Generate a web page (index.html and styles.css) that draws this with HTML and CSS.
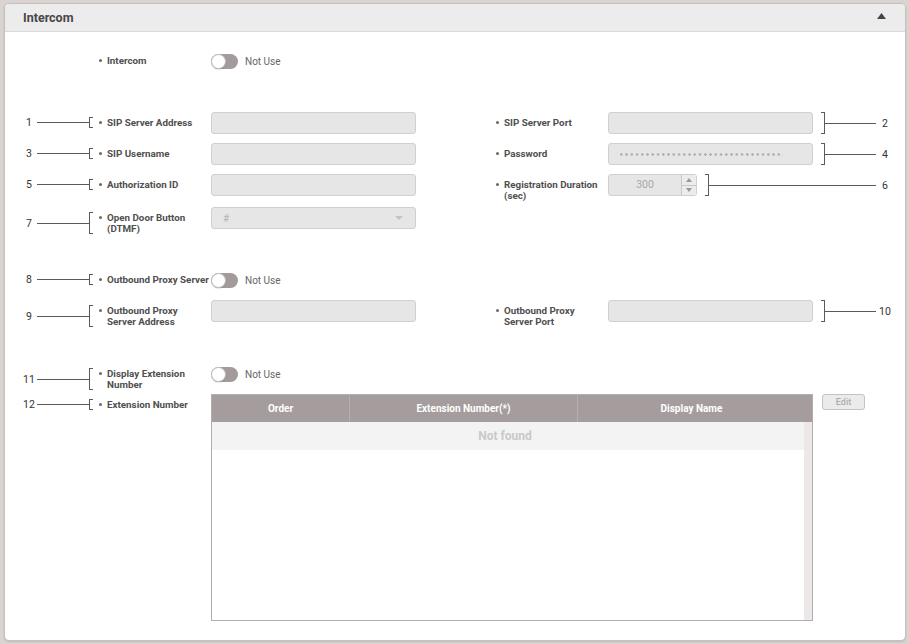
FILE: index.html
```html
<!DOCTYPE html>
<html>
<head>
<meta charset="utf-8">
<link rel="stylesheet" href="styles.css">
</head>
<body>
<div class="panel">
  <div class="phead">
    <span class="ptitle">Intercom</span>
    <svg class="caret" width="9" height="6" viewBox="0 0 9 6"><path d="M4.5 0L9 6H0z" fill="#454545"/></svg>
  </div>
  <div class="pbody">
    <div class="row h62">
      <div class="lcell"><span class="co-l hide"><span class="num">0</span><span class="ln"></span><span class="br"></span></span><span class="dot"></span><span class="lab">Intercom</span></div>
      <div class="fcell tg"><span class="tog"></span><span class="tog-t">Not Use</span></div>
    </div>

    <div class="row h31">
      <div class="lcell"><span class="co-l"><span class="num">1</span><span class="ln"></span><span class="br"></span></span><span class="dot"></span><span class="lab">SIP Server Address</span></div>
      <div class="fcell"><div class="inp"></div></div>
      <div class="gap"></div>
      <div class="rcell"><span class="dot"></span><span class="lab">SIP Server Port</span></div>
      <div class="rfield"><div class="inp"></div><span class="co-r"><span class="br"></span><span class="ln"></span><span class="num">2</span></span></div>
    </div>

    <div class="row h31">
      <div class="lcell"><span class="co-l"><span class="num">3</span><span class="ln"></span><span class="br"></span></span><span class="dot"></span><span class="lab">SIP Username</span></div>
      <div class="fcell"><div class="inp"></div></div>
      <div class="gap"></div>
      <div class="rcell"><span class="dot"></span><span class="lab">Password</span></div>
      <div class="rfield"><div class="inp pw"><span class="pwdots"></span></div><span class="co-r"><span class="br"></span><span class="ln"></span><span class="num">4</span></span></div>
    </div>

    <div class="row h33">
      <div class="lcell"><span class="co-l"><span class="num">5</span><span class="ln"></span><span class="br"></span></span><span class="dot"></span><span class="lab">Authorization ID</span></div>
      <div class="fcell"><div class="inp"></div></div>
      <div class="gap"></div>
      <div class="rcell"><span class="dot"></span><span class="lab">Registration Duration<br>(sec)</span></div>
      <div class="rfield">
        <div class="inp spin"><span class="spin-v">300</span><span class="spin-b"><span class="sb up"></span><span class="sb dn"></span></span></div>
        <span class="co-r"><span class="br"></span><span class="ln"></span><span class="num">6</span></span>
      </div>
    </div>

    <div class="row h62">
      <div class="lcell"><span class="co-l"><span class="num">7</span><span class="ln"></span><span class="br"></span></span><span class="dot"></span><span class="lab">Open Door Button<br>(DTMF)</span></div>
      <div class="fcell"><div class="inp sel"><span class="sel-v">#</span><span class="sel-a"></span></div></div>
    </div>

    <div class="row h31">
      <div class="lcell"><span class="co-l"><span class="num">8</span><span class="ln"></span><span class="br"></span></span><span class="dot"></span><span class="lab">Outbound Proxy Server</span></div>
      <div class="fcell tg"><span class="tog"></span><span class="tog-t">Not Use</span></div>
    </div>

    <div class="row h63">
      <div class="lcell"><span class="co-l"><span class="num">9</span><span class="ln"></span><span class="br"></span></span><span class="dot"></span><span class="lab">Outbound Proxy<br>Server Address</span></div>
      <div class="fcell"><div class="inp"></div></div>
      <div class="gap"></div>
      <div class="rcell"><span class="dot"></span><span class="lab">Outbound Proxy<br>Server Port</span></div>
      <div class="rfield"><div class="inp"></div><span class="co-r"><span class="br"></span><span class="ln"></span><span class="num">10</span></span></div>
    </div>

    <div class="row h31">
      <div class="lcell"><span class="co-l"><span class="num">11</span><span class="ln"></span><span class="br"></span></span><span class="dot"></span><span class="lab">Display Extension<br>Number</span></div>
      <div class="fcell tg"><span class="tog"></span><span class="tog-t">Not Use</span></div>
    </div>

    <div class="row">
      <div class="lcell"><span class="co-l"><span class="num">12</span><span class="ln"></span><span class="br"></span></span><span class="dot"></span><span class="lab">Extension Number</span></div>
      <div class="tblwrap">
        <div class="tbl">
          <div class="thead">
            <div class="th">Order</div>
            <div class="th">Extension Number(*)</div>
            <div class="th last">Display Name</div>
          </div>
          <div class="tbody">
            <div class="tmain"><div class="nf">Not found</div></div>
            <div class="scroll"></div>
          </div>
        </div>
        <button class="edit">Edit</button>
      </div>
    </div>
  </div>
</div>
</body>
</html>
```

FILE: styles.css
```css
html, body {
  margin: 0;
  padding: 0;
}
body {
  background: #d9d4d1;
  font-family: Roboto, "Liberation Sans", sans-serif;
  width: 909px;
  height: 644px;
  overflow: hidden;
  padding: 3px 0 0 4px;
  box-sizing: border-box;
}
.panel {
  width: 902px;
  height: 638px;
  box-sizing: border-box;
  background: #fff;
  border: 1px solid #c6c1bf;
  border-radius: 5px;
  box-shadow: 0 1px 2px rgba(0,0,0,0.12);
  overflow: hidden;
}
.phead {
  height: 27px;
  background: #ececec;
  border-bottom: 1px solid #d9d9d9;
  display: flex;
  align-items: center;
  justify-content: space-between;
  padding: 0 19px 0 18px;
}
.ptitle {
  font-size: 12.5px;
  font-weight: 700;
  color: #474747;
}
.caret { margin-top: -3px; }
.pbody {
  padding-top: 18px;
}
.row {
  display: flex;
  align-items: flex-start;
}
.h31 { height: 31px; }
.h33 { height: 33px; }
.h62 { height: 62px; }
.h63 { height: 63px; }

.lcell {
  width: 206px;
  flex-shrink: 0;
  box-sizing: border-box;
  display: flex;
  align-items: stretch;
  padding-top: 5px;
}
.co-l {
  display: flex;
  align-items: center;
  margin-left: 17px;
}
.co-l.hide { visibility: hidden; }
.num {
  width: 14px;
  text-align: center;
  font-size: 10.5px;
  line-height: 11px;
  color: #333;
  flex-shrink: 0;
}
.ln {
  height: 1px;
  background: #5a5a5a;
}
.co-l .ln {
  width: 52px;
  margin-left: 1px;
}
.br {
  width: 3px;
  align-self: stretch;
  border: 1px solid #5a5a5a;
  flex-shrink: 0;
}
.co-l .br { border-right: none; }
.dot {
  width: 3px;
  height: 3px;
  border-radius: 50%;
  background: #6a6a6a;
  margin: 4px 5px 0 6px;
  flex-shrink: 0;
}
.lab {
  font-size: 9.8px;
  font-weight: 700;
  line-height: 11px;
  color: #4f4f4f;
  white-space: nowrap;
}
.fcell {
  width: 205px;
  flex-shrink: 0;
}
.fcell.tg {
  height: 22px;
  display: flex;
  align-items: center;
}
.gap { width: 80px; flex-shrink: 0; }
.rcell {
  width: 112px;
  flex-shrink: 0;
  display: flex;
  padding-top: 5px;
}
.rcell .dot { margin-left: 0; }
.rfield {
  width: 285px;
  flex-shrink: 0;
  display: flex;
  align-items: stretch;
}
.inp {
  width: 205px;
  height: 22px;
  box-sizing: border-box;
  border: 1px solid #d0d0d0;
  border-radius: 3px;
  background: #e6e6e6;
  flex-shrink: 0;
}
.co-r {
  flex: 1;
  display: flex;
  align-items: center;
  margin-left: 8px;
}
.co-r .br { border-left: none; }
.co-r .ln { flex: 1; }
.co-r .num { width: 16px; margin-left: 1px; }

.pw {
  display: flex;
  align-items: center;
  padding-left: 11px;
}
.pwdots {
  width: 163px;
  height: 3px;
  background-image: radial-gradient(circle at 1.3px 1.5px, #adadad 1.1px, transparent 1.4px);
  background-size: 5.25px 3px;
  background-repeat: repeat-x;
}

.spin {
  width: 89px;
  display: flex;
  align-items: stretch;
}
.spin-v {
  flex: 1;
  text-align: center;
  font-size: 10.5px;
  line-height: 20px;
  color: #a8a8a8;
}
.spin-b {
  width: 14px;
  display: flex;
  flex-direction: column;
  border-left: 1px solid #c8c8c8;
  background: #ececec;
}
.sb {
  flex: 1;
  display: flex;
  align-items: center;
  justify-content: center;
}
.sb.up { border-bottom: 1px solid #c8c8c8; }
.sb::after {
  content: "";
  border-left: 3px solid transparent;
  border-right: 3px solid transparent;
}
.sb.up::after { border-bottom: 4px solid #999; }
.sb.dn::after { border-top: 4px solid #999; }

.sel {
  display: flex;
  align-items: center;
  justify-content: space-between;
  padding: 0 12px 0 11px;
}
.sel-v {
  font-size: 10px;
  color: #b5b5b5;
}
.sel-a {
  border-left: 4px solid transparent;
  border-right: 4px solid transparent;
  border-top: 4px solid #c2c2c2;
}

.tog {
  position: relative;
  width: 27px;
  height: 15px;
  border-radius: 8px;
  background: #a39b9b;
  flex-shrink: 0;
}
.tog::after {
  content: "";
  position: absolute;
  left: 0;
  top: 0;
  width: 15px;
  height: 15px;
  box-sizing: border-box;
  border-radius: 50%;
  background: #fff;
  border: 1px solid #c3bebe;
  box-shadow: 0 1px 1px rgba(0,0,0,0.1);
}
.tog-t {
  margin-left: 7px;
  font-size: 10px;
  color: #666;
}

.tblwrap {
  display: flex;
  align-items: flex-start;
}
.tbl {
  width: 602px;
  height: 227px;
  box-sizing: border-box;
  border: 1px solid #b3aeae;
  display: flex;
  flex-direction: column;
}
.thead {
  height: 27px;
  background: #a59d9d;
  display: grid;
  grid-template-columns: 138px 228px 227px 7px;
}
.th {
  color: #fff;
  font-size: 10px;
  font-weight: 700;
  display: flex;
  align-items: center;
  justify-content: center;
  border-right: 1px solid #b7afaf;
}
.th.last { border-right: none; }
.tbody {
  flex: 1;
  display: flex;
}
.tmain { flex: 1; }
.nf {
  height: 28px;
  background: #f3f3f3;
  text-align: center;
  font-size: 12px;
  font-weight: 700;
  line-height: 28px;
  color: #c9c9c9;
  padding-right: 6px;
}
.scroll {
  width: 8px;
  background: #ece8e8;
}
.edit {
  margin-left: 9px;
  width: 43px;
  height: 16px;
  padding: 0;
  box-sizing: border-box;
  border: 1px solid #c3c3c3;
  border-radius: 3px;
  background: #ebebeb;
  color: #ababab;
  font-family: Roboto, "Liberation Sans", sans-serif;
  font-size: 9px;
  font-weight: 500;
  line-height: 14px;
}
```
